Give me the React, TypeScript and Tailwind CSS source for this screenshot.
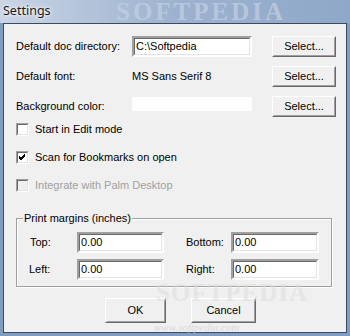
import React from "react";

const sunken =
  "border-2 border-t-[#a0a0a0] border-l-[#a0a0a0] border-b-white border-r-white";
const sunkenInner =
  "border border-t-[#696969] border-l-[#696969] border-b-[#e3e3e3] border-r-[#e3e3e3]";

function TextBox({ value, w, h = 21 }: { value: string; w: string; h?: number }) {
  return (
    <div className={`${w} ${sunken} bg-white`} style={{ height: h }}>
      <div className={`w-full h-full ${sunkenInner} flex items-center pl-[1px] text-black`}>
        {value}
      </div>
    </div>
  );
}

function Button({ label, w, h = 21 }: { label: string; w: string; h?: number }) {
  return (
    <div
      className={`${w} border border-t-white border-l-white border-b-[#696969] border-r-[#696969] bg-[#f0f0f0]`}
      style={{ height: h }}
    >
      <div className="w-full h-full border border-transparent border-b-[#a0a0a0] border-r-[#a0a0a0] flex items-center justify-center text-black">
        {label}
      </div>
    </div>
  );
}

function CheckBox({ checked, disabled }: { checked?: boolean; disabled?: boolean }) {
  return (
    <div className={`w-[13px] h-[13px] border border-t-[#a0a0a0] border-l-[#a0a0a0] border-b-white border-r-white`}>
      <div
        className={`w-full h-full border border-t-[#696969] border-l-[#696969] border-b-[#e3e3e3] border-r-[#e3e3e3] ${
          disabled ? "bg-[#f0f0f0]" : "bg-white"
        } flex items-center justify-center`}
      >
        {checked && (
          <svg width="7" height="7" viewBox="0 0 7 7">
            <path d="M0 2 L2 4 L6 0 M0 3 L2 5 L6 1 M0 4 L2 6 L6 2" stroke="#000" strokeWidth="1" fill="none" shapeRendering="crispEdges" />
          </svg>
        )}
      </div>
    </div>
  );
}

export default function App() {
  return (
    <div
      className="w-[350px] h-[336px] flex flex-col bg-[#7f9cc3] overflow-hidden"
      style={{ fontFamily: '"Liberation Sans", Arial, sans-serif', fontSize: 11 }}
    >
      {/* Title bar */}
      <div className="relative h-[23px] shrink-0 bg-gradient-to-r from-[#c9d5e5] via-[#9db2cf] to-[#8fa8c9] overflow-hidden">
        <div
          className="pointer-events-none absolute left-[116px] top-[1px] text-[25px] font-bold tracking-[3px] text-[#c3d1e4] opacity-70 leading-[21px]"
          style={{ fontFamily: '"Liberation Serif", "Times New Roman", serif' }}
        >
          SOFTPEDIA
        </div>
        <div
          className="relative pl-[3px] pt-[2px] text-[12.5px] text-[#1b1b1b] leading-[18px]"
          style={{ fontFamily: '"Noto Sans", "Open Sans", sans-serif', textShadow: "0 0 6px #fff, 0 0 3px #fff" }}
        >
          Settings
        </div>
      </div>

      {/* Client */}
      <div className="relative mx-[3px] mb-[3px] flex-1 bg-[#f0f0f0] border border-[#3a4a60] flex flex-col pl-[12px] text-black">
        {/* Row 1 */}
        <div className="flex items-center h-[21px] mt-[12px]">
          <div className="w-[116px]">Default doc directory:</div>
          <TextBox value="C:\Softpedia" w="w-[120px]" />
          <div className="ml-[20px]">
            <Button label="Select..." w="w-[64px]" />
          </div>
        </div>
        {/* Row 2 */}
        <div className="flex items-center h-[21px] mt-[9px]">
          <div className="w-[116px]">Default font:</div>
          <div className="w-[120px]">MS Sans Serif 8</div>
          <div className="ml-[20px]">
            <Button label="Select..." w="w-[64px]" />
          </div>
        </div>
        {/* Row 3 */}
        <div className="flex items-center h-[21px] mt-[9px]">
          <div className="w-[116px]">Background color:</div>
          <div className="w-[120px] h-[14px] bg-white self-start mt-[1px]" />
          <div className="ml-[20px]">
            <Button label="Select..." w="w-[64px]" />
          </div>
        </div>

        {/* Checkboxes */}
        <div className="flex items-center gap-[6px] mt-[5px] h-[14px]">
          <CheckBox />
          <span>Start in Edit mode</span>
        </div>
        <div className="flex items-center gap-[6px] mt-[14px] h-[14px]">
          <CheckBox checked />
          <span>Scan for Bookmarks on open</span>
        </div>
        <div className="flex items-center gap-[6px] mt-[14px] h-[14px] text-[#a0a0a0]">
          <CheckBox disabled />
          <span>Integrate with Palm Desktop</span>
        </div>

        {/* Group box */}
        <div className="relative mt-[26px] w-[316px] h-[69px] border border-[#a0a0a0] shadow-[inset_1px_1px_0_#fff,1px_1px_0_#fff]">
          <div className="absolute left-[6px] top-[-8px] bg-[#f0f0f0] px-[1px] leading-[14px]">
            Print margins (inches)
          </div>
          <div className="flex items-center h-[21px] mt-[13px]">
            <div className="w-[60px] pl-[13px]">Top:</div>
            <TextBox value="0.00" w="w-[87px]" />
            <div className="w-[45px] ml-[22px]">Bottom:</div>
            <TextBox value="0.00" w="w-[88px]" />
          </div>
          <div className="flex items-center h-[21px] mt-[6px]">
            <div className="w-[60px] pl-[12px]">Left:</div>
            <TextBox value="0.00" w="w-[87px]" />
            <div className="w-[45px] ml-[22px]">Right:</div>
            <TextBox value="0.00" w="w-[88px]" />
          </div>
        </div>

        {/* Buttons */}
        <div className="flex mt-[11px] pl-[89px] gap-[25px]">
          <Button label="OK" w="w-[61px]" h={25} />
          <Button label="Cancel" w="w-[65px]" h={25} />
        </div>

        {/* watermark */}
        <div
          className="pointer-events-none absolute left-[152px] top-[259px] text-[25px] font-bold tracking-[1px] text-[#dcdcdc] opacity-50 leading-[20px]"
          style={{ fontFamily: '"Liberation Serif", serif' }}
        >
          SOFTPEDIA
        </div>
        <div
          className="pointer-events-none absolute left-[150px] top-[298px] text-[11px] italic text-[#d0d0d0] opacity-70 leading-none"
          style={{ fontFamily: '"Liberation Serif", serif' }}
        >
          www.softpedia.com
        </div>
      </div>
    </div>
  );
}
